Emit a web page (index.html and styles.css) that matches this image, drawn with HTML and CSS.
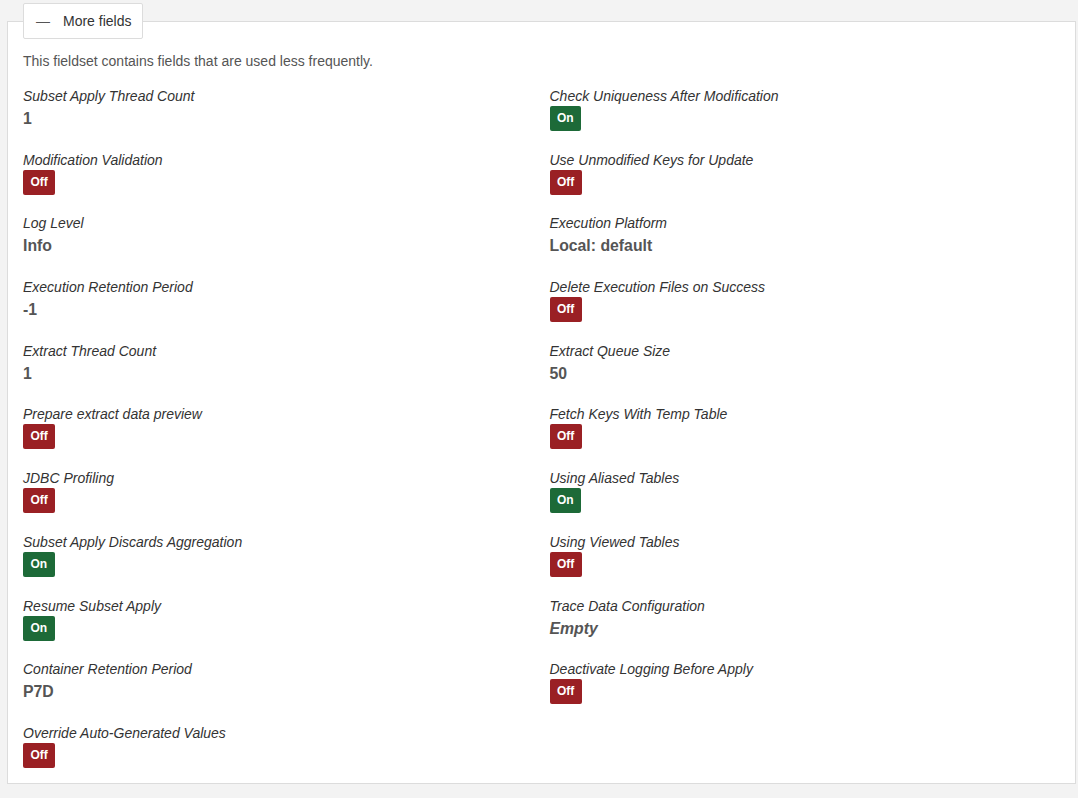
FILE: index.html
```html
<html>
<head>
<title>More fields</title>
<link rel="stylesheet" href="styles.css">
</head>
<body>
<div class="page">
<fieldset class="panel">
<legend class="toggle"><span class="dash">&mdash;</span>More fields</legend>
<p class="intro">This fieldset contains fields that are used less frequently.</p>
<div class="fields">
  <div class="field"><div class="label">Subset Apply Thread Count</div><div class="value">1</div></div>
  <div class="field"><div class="label">Check Uniqueness After Modification</div><div class="value"><span class="badge on">On</span></div></div>

  <div class="field"><div class="label">Modification Validation</div><div class="value"><span class="badge off">Off</span></div></div>
  <div class="field"><div class="label">Use Unmodified Keys for Update</div><div class="value"><span class="badge off">Off</span></div></div>

  <div class="field"><div class="label">Log Level</div><div class="value">Info</div></div>
  <div class="field"><div class="label">Execution Platform</div><div class="value">Local: default</div></div>

  <div class="field"><div class="label">Execution Retention Period</div><div class="value">-1</div></div>
  <div class="field"><div class="label">Delete Execution Files on Success</div><div class="value"><span class="badge off">Off</span></div></div>

  <div class="field"><div class="label">Extract Thread Count</div><div class="value">1</div></div>
  <div class="field"><div class="label">Extract Queue Size</div><div class="value">50</div></div>

  <div class="field"><div class="label">Prepare extract data preview</div><div class="value"><span class="badge off">Off</span></div></div>
  <div class="field"><div class="label">Fetch Keys With Temp Table</div><div class="value"><span class="badge off">Off</span></div></div>

  <div class="field"><div class="label">JDBC Profiling</div><div class="value"><span class="badge off">Off</span></div></div>
  <div class="field"><div class="label">Using Aliased Tables</div><div class="value"><span class="badge on">On</span></div></div>

  <div class="field"><div class="label">Subset Apply Discards Aggregation</div><div class="value"><span class="badge on">On</span></div></div>
  <div class="field"><div class="label">Using Viewed Tables</div><div class="value"><span class="badge off">Off</span></div></div>

  <div class="field"><div class="label">Resume Subset Apply</div><div class="value"><span class="badge on">On</span></div></div>
  <div class="field"><div class="label">Trace Data Configuration</div><div class="value empty">Empty</div></div>

  <div class="field"><div class="label">Container Retention Period</div><div class="value">P7D</div></div>
  <div class="field"><div class="label">Deactivate Logging Before Apply</div><div class="value"><span class="badge off">Off</span></div></div>

  <div class="field"><div class="label">Override Auto-Generated Values</div><div class="value"><span class="badge off">Off</span></div></div>
</div>
</fieldset>
</div>
</body>
</html>
```

FILE: styles.css
```css
body { margin:0; background:#f3f3f3; color:#333; font-family:"Liberation Sans", Arial, Helvetica, sans-serif; font-size:14px; }
.page { padding:3px 2px 0 7px; }

.panel { margin:0; padding:0 15px 15px; border:1px solid #dcdcdc; background:#fff; min-width:0; }
.toggle { margin:0; padding:0 11px 0 12px; height:34px; line-height:34px; white-space:nowrap; border:1px solid #dcdcdc; border-radius:2px; background:#fff; color:#333; font-size:14px; }
.dash { display:inline-block; width:27px; color:#555; }

.intro { margin:12px 0 15px; line-height:20px; font-size:14px; color:#555; }

.fields { display:grid; grid-template-columns:1fr 1fr; column-gap:16px; row-gap:18.7px; }
.field { height:45px; }
.label { line-height:20px; font-style:italic; color:#333; font-size:14px; }
.value { line-height:25px; font-weight:bold; font-size:15.8px; color:#555; }
.value.empty { font-style:italic; }

.badge { display:inline-block; vertical-align:top; height:25px; line-height:25px; padding:0 7.5px; border-radius:2px; color:#fff; font-size:12px; font-weight:bold; }
.badge.off { background:#9a2024; }
.badge.on { background:#1d6a38; }
```
